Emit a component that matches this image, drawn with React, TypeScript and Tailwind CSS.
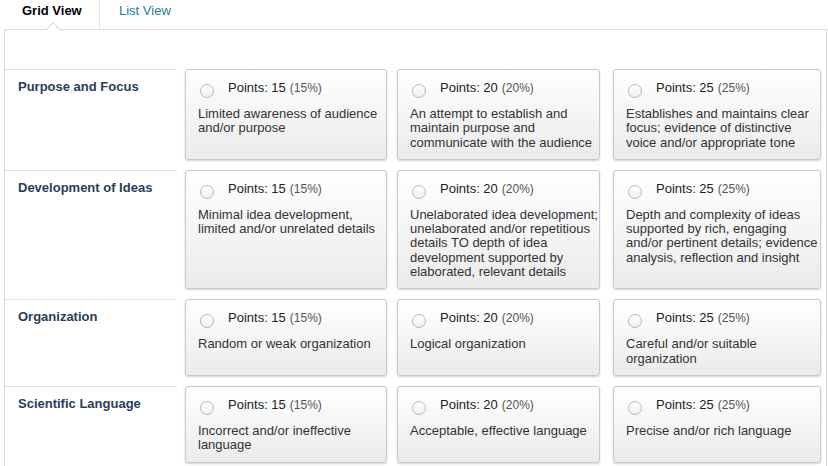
import React from 'react';

interface Level {
    points: number;
    lines: string[];
}

interface Criterion {
    name: string;
    levels: Level[];
}

// line breaks follow the reference layout
const criteria: Criterion[] = [
    {
        name: 'Purpose and Focus',
        levels: [
            { points: 15, lines: ['Limited awareness of audience', 'and/or purpose'] },
            { points: 20, lines: ['An attempt to establish and', 'maintain purpose and', 'communicate with the audience'] },
            { points: 25, lines: ['Establishes and maintains clear', 'focus; evidence of distinctive', 'voice and/or appropriate tone'] },
        ],
    },
    {
        name: 'Development of Ideas',
        levels: [
            { points: 15, lines: ['Minimal idea development,', 'limited and/or unrelated details'] },
            {
                points: 20,
                lines: [
                    'Unelaborated idea development;',
                    'unelaborated and/or repetitious',
                    'details TO depth of idea',
                    'development supported by',
                    'elaborated, relevant details',
                ],
            },
            {
                points: 25,
                lines: [
                    'Depth and complexity of ideas',
                    'supported by rich, engaging',
                    'and/or pertinent details; evidence',
                    'analysis, reflection and insight',
                ],
            },
        ],
    },
    {
        name: 'Organization',
        levels: [
            { points: 15, lines: ['Random or weak organization'] },
            { points: 20, lines: ['Logical organization'] },
            { points: 25, lines: ['Careful and/or suitable', 'organization'] },
        ],
    },
    {
        name: 'Scientific Language',
        levels: [
            { points: 15, lines: ['Incorrect and/or ineffective', 'language'] },
            { points: 20, lines: ['Acceptable, effective language'] },
            { points: 25, lines: ['Precise and/or rich language'] },
        ],
    },
];

// column widths and left margins of the three level cards
const cols = [
    'ml-[8px] w-[202px]',
    'ml-[10px] w-[203px]',
    'ml-[13px] w-[208px]',
];

const LevelCard: React.FC<{ level: Level; className: string }> = ({ level, className }) => (
    <div
        className={`${className} overflow-hidden rounded-[3px] border border-[#c9c9c9] bg-gradient-to-b from-white to-[#ebebeb] pt-[11px] pl-[12px] pb-[9px] shadow-[0_1px_2px_rgba(0,0,0,0.18)]`}
    >
        <div className="flex h-[14px] items-start">
            <span className="mt-[3px] ml-[2px] h-[14px] w-[14px] shrink-0 rounded-full border border-[#b8b8b8] bg-gradient-to-b from-white to-[#f0f0f0]" />
            <span className="ml-[14px] flex h-[14px] items-baseline gap-[4px] text-[13px] leading-[14px] text-[#222]">
                <span>Points: {level.points}</span>
                <span className="text-[12px] leading-[14px] text-[#555]">({level.points}%)</span>
            </span>
        </div>
        <div className="mt-[12px] text-[13px] leading-[14.3px] whitespace-nowrap text-[#333]">
            {level.lines.map((line) => (
                <div key={line}>{line}</div>
            ))}
        </div>
    </div>
);

const App: React.FC = () => {
    return (
        <div className="h-[466px] w-[828px] overflow-hidden bg-white font-['Liberation_Sans',Arial,sans-serif]">
            <div className="flex h-[29px] items-stretch">
                <div className="w-[100px] border-r border-dotted border-[#cfcfcf] pt-[3px] pl-[22px] text-[13px] leading-[15px] font-bold text-black">
                    Grid View
                </div>
                <div className="pt-[3px] pl-[19px] text-[13px] leading-[15px] text-[#24809c]">List View</div>
            </div>

            <div className="relative ml-[4px] w-[823px] border-t border-r border-l border-[#dcdcdc] pt-[39px]">
                <span className="absolute top-[-6px] left-[43px] h-[10px] w-[10px] rotate-45 border-t border-l border-[#dcdcdc] bg-white" />

                {criteria.map((c) => (
                    <div key={c.name} className="flex items-stretch pb-[10px]">
                        <div className="w-[172px] shrink-0 border-t border-[#e0e0e0] pt-[9px] pl-[13px] text-[13px] leading-[16px] font-bold text-[#2a3d5a]">
                            {c.name}
                        </div>
                        {c.levels.map((l, i) => (
                            <LevelCard key={l.points} level={l} className={cols[i]} />
                        ))}
                    </div>
                ))}
            </div>
        </div>
    );
};

export default App;
